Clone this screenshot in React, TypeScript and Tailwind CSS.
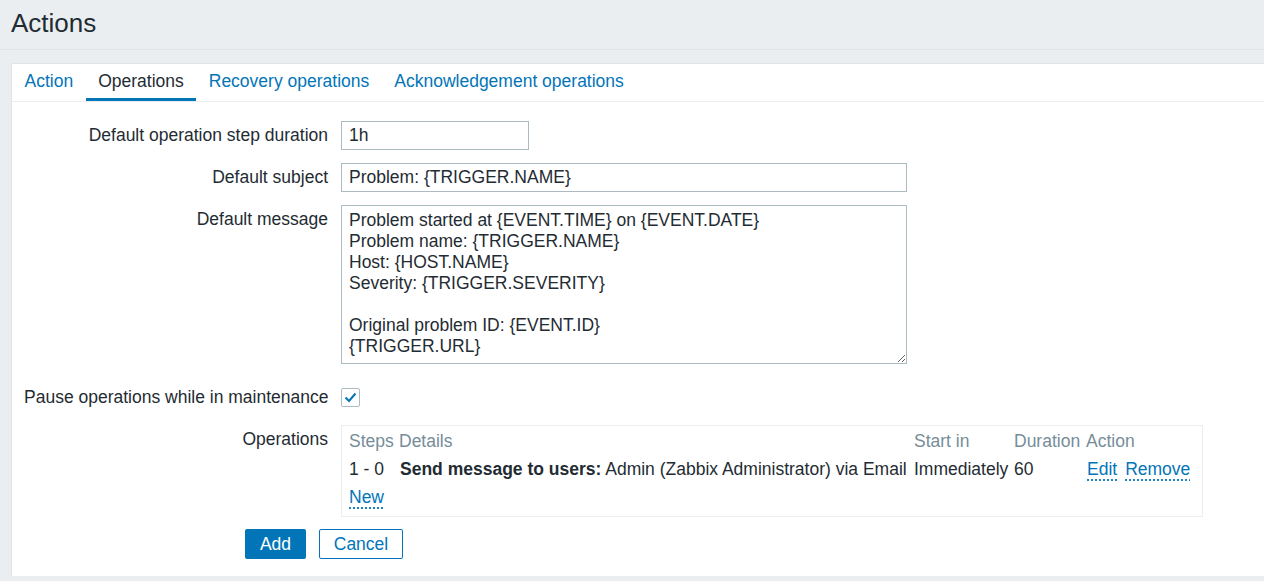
import React from 'react';

const font = { fontFamily: '"Liberation Sans", Arial, sans-serif' };

const tabs = ['Action', 'Operations', 'Recovery operations', 'Acknowledgement operations'];

const message = `Problem started at {EVENT.TIME} on {EVENT.DATE}
Problem name: {TRIGGER.NAME}
Host: {HOST.NAME}
Severity: {TRIGGER.SEVERITY}

Original problem ID: {EVENT.ID}
{TRIGGER.URL}`;

const Label: React.FC<{ children: React.ReactNode }> = ({ children }) => (
  <div className="w-[304px] shrink-0 whitespace-nowrap pt-[4px] text-right leading-[21px]">{children}</div>
);

export default function App() {
  return (
    <div
      className="flex min-h-[581px] flex-col bg-[#ebeef0] text-[17.5px] text-[#1f2c33]"
      style={font}
    >
      <div className="h-[50px] border-b border-[#dfe4e7] px-[11px] pt-[8px]">
        <h1 className="text-[26px] leading-[31px]">Actions</h1>
      </div>

      <div className="ml-[11px] mt-[13px] border-l border-t border-[#dfe4e7] bg-white">
        {/* tabs */}
        <div className="flex border-b border-[#ebeef0]">
          {tabs.map((t) => (
            <div
              key={t}
              className={
                t === 'Operations'
                  ? 'h-[37px] border-b-[3px] border-[#0275b8] px-[12.5px] pt-[7px] leading-[21px] text-[#1f2c33]'
                  : 'h-[37px] px-[12.5px] pt-[7px] leading-[21px] text-[#0275b8]'
              }
            >
              {t}
            </div>
          ))}
        </div>

        {/* form */}
        <div className="pb-[17px] pl-[12px] pt-[19px]">
          <div className="flex gap-[13px]">
            <Label>Default operation step duration</Label>
            <input
              readOnly
              value="1h"
              className="h-[29px] w-[188px] border border-[#acbbc2] px-[7px] outline-none"
            />
          </div>

          <div className="mt-[13px] flex gap-[13px]">
            <Label>Default subject</Label>
            <input
              readOnly
              value="Problem: {TRIGGER.NAME}"
              className="h-[29px] w-[566px] border border-[#acbbc2] px-[7px] outline-none"
            />
          </div>

          <div className="mt-[13px] flex gap-[13px]">
            <Label>Default message</Label>
            <textarea
              readOnly
              value={message}
              className="h-[159px] w-[566px] border border-[#acbbc2] px-[7px] py-[4px] leading-[21px] outline-none"
            />
          </div>

          <div className="mt-[19px] flex h-[29px] items-center gap-[13px]">
            <div className="w-[304px] shrink-0 whitespace-nowrap text-right leading-[21px]">
              Pause operations while in maintenance
            </div>
            <div className="flex h-[19px] w-[19px] items-center justify-center rounded-[2px] border border-[#acbbc2]">
              <svg width="13" height="11" viewBox="0 0 13 11" fill="none">
                <path d="M1.5 5.5l3.5 3.5l6.5 -7.5" stroke="#0275b8" strokeWidth="2" />
              </svg>
            </div>
          </div>

          <div className="mt-[13px] flex gap-[13px]">
            <Label>Operations</Label>
            <div className="w-[862px] border border-[#ebeef0] px-[7px] pb-[5px] pt-[1px]">
              <div className="grid grid-cols-[50px_515px_100px_72px_1fr] leading-[28px]">
                <div className="text-[#768d99]">Steps</div>
                <div className="text-[#768d99]">Details</div>
                <div className="text-[#768d99]">Start in</div>
                <div className="text-[#768d99]">Duration</div>
                <div className="text-[#768d99]">Action</div>

                <div>1 - 0</div>
                <div className="whitespace-nowrap pl-px">
                  <b>Send message to users:</b> Admin (Zabbix Administrator) via Email
                </div>
                <div>Immediately</div>
                <div>60</div>
                <div className="flex gap-[8px] pl-px text-[#0275b8]">
                  <span className="underline decoration-dotted underline-offset-[5px]">Edit</span>
                  <span className="underline decoration-dotted underline-offset-[5px]">Remove</span>
                </div>

                <div className="col-span-5">
                  <span className="text-[#0275b8] underline decoration-dotted underline-offset-[5px]">
                    New
                  </span>
                </div>
              </div>
            </div>
          </div>

          <div className="ml-[221px] mt-[12px] flex gap-[13px]">
            <button className="h-[30px] w-[61px] rounded-[2px] bg-[#0275b8] text-white">Add</button>
            <button className="h-[30px] w-[84px] rounded-[2px] border border-[#0275b8] bg-white text-[#0275b8]">
              Cancel
            </button>
          </div>
        </div>
      </div>
    </div>
  );
}
